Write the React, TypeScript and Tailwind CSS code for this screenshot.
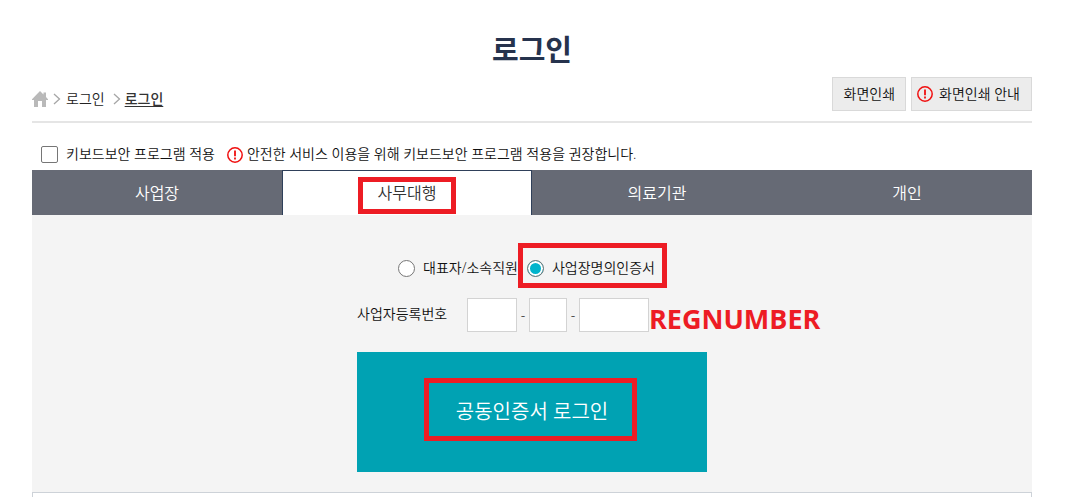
import { useState } from "react";

const tabs = ["사업장", "사무대행", "의료기관", "개인"];

function AlertIcon() {
  return (
    <svg viewBox="0 0 16 16" className="size-4 shrink-0" fill="none" aria-hidden="true">
      <circle cx="8" cy="8" r="7.2" stroke="#f01010" strokeWidth="1.5" />
      <path d="M8 3.5v5.8M8 10.6v2" stroke="#f01010" strokeWidth="1.8" />
    </svg>
  );
}

function HomeIcon() {
  return (
    <svg viewBox="0 0 16 16" className="size-4" fill="#b9b9b9" aria-hidden="true">
      <path d="M8 0 11.5 3.5V1.5H14V6L16 8.2V9H14V16H10V10H6V16H2V9H0V8.2Z" />
    </svg>
  );
}

function Chevron() {
  return (
    <svg viewBox="0 0 8 12" className="h-3 w-2" fill="none" aria-hidden="true">
      <path d="M1 1 6.5 6 1 11" stroke="#a6a6a6" strokeWidth="1.3" />
    </svg>
  );
}

const radioClass =
  "size-[17px] shrink-0 appearance-none rounded-full border border-[#767676] bg-white checked:bg-[#00b4cc] checked:shadow-[inset_0_0_0_2px_white]";
const numberClass = "h-[34px] border border-[#d3d3d3] bg-white px-2 text-sm outline-none";

export default function App() {
  const [active, setActive] = useState(1);
  const [cert, setCert] = useState("business");

  return (
    <main className="flex min-h-screen flex-col bg-white pr-[57px] pl-8 font-['Open_Sans','Noto_Sans_CJK_KR',sans-serif] text-sm leading-5 font-[350] text-[#111]">
      <h1 className="pt-[30px] text-center text-[29px] leading-10 font-bold text-[#26334d]">로그인</h1>

      <div className="mt-[7px] flex items-start justify-between border-b-2 border-[#e5e5e5] pb-[10px]">
        <nav aria-label="현재 위치" className="mt-3 flex items-center">
          <a href="#home" aria-label="홈">
            <HomeIcon />
          </a>
          <span className="mx-[5px]">
            <Chevron />
          </span>
          <a href="#login" className="text-[#222]">로그인</a>
          <span className="mr-1 ml-2">
            <Chevron />
          </span>
          <a href="#login" aria-current="page" className="font-medium text-[#333] underline underline-offset-2">
            로그인
          </a>
        </nav>
        <div className="flex gap-[5px]">
          <button type="button" className="h-[34px] border border-[#d9d9d9] bg-[#ececec] pr-[10px] pl-[11px]">
            화면인쇄
          </button>
          <button
            type="button"
            className="flex h-[34px] items-center gap-[6px] border border-[#d9d9d9] bg-[#ececec] pr-[11px] pl-[5px]"
          >
            <AlertIcon />
            화면인쇄 안내
          </button>
        </div>
      </div>

      <div className="flex h-[47px] items-center pt-4 pl-[9px]">
        <input
          id="keyboard-security"
          type="checkbox"
          className="size-[17px] appearance-none rounded-xs border border-[#767676] bg-white checked:bg-[#00b4cc]"
        />
        <label htmlFor="keyboard-security" className="ml-2 pb-[2px]">
          키보드보안 프로그램 적용
        </label>
        <p className="ml-3 flex items-center gap-1">
          <AlertIcon />
          <span className="pb-[2px]">안전한 서비스 이용을 위해 키보드보안 프로그램 적용을 권장합니다.</span>
        </p>
      </div>

      <div role="tablist" className="grid h-[45px] grid-cols-4 bg-[#666a75] text-base">
        {tabs.map((tab, i) => (
          <button
            key={tab}
            type="button"
            role="tab"
            aria-selected={active === i}
            onClick={() => setActive(i)}
            className={
              active === i
                ? "border-x border-t border-[#2f405a] bg-white text-[#333]"
                : "text-white"
            }
          >
            <span className="relative">
              {tab}
              {i === 1 && (
                <span className="pointer-events-none absolute -inset-x-5 -top-[5px] -bottom-[10px] border-5 border-[#ed1c24]" />
              )}
            </span>
          </button>
        ))}
      </div>

      <form className="bg-[#f4f4f4] pt-[43px] pb-5" onSubmit={(e) => e.preventDefault()}>
        <div className="mx-auto w-[350px]">
          <div className="flex h-5 items-center gap-[9px] pl-[41px] whitespace-nowrap">
            <label className="flex items-center gap-2">
              <input
                type="radio"
                name="cert"
                checked={cert === "owner"}
                onChange={() => setCert("owner")}
                className={radioClass}
              />
              대표자/소속직원
            </label>
            <label className="relative flex items-center gap-2">
              <input
                type="radio"
                name="cert"
                checked={cert === "business"}
                onChange={() => setCert("business")}
                className={radioClass}
              />
              사업장명의인증서
              <span className="pointer-events-none absolute -top-[15px] -right-3 -bottom-[10px] -left-[9px] border-5 border-[#ed1c24]" />
            </label>
          </div>

          <div className="mt-5 flex items-center">
            <label htmlFor="reg-1" className="w-[110px] pb-[2px]">
              사업자등록번호
            </label>
            <input id="reg-1" maxLength={3} className={`${numberClass} w-[50px]`} />
            <span className="w-3 text-center">-</span>
            <input aria-label="사업자등록번호 둘째 자리" maxLength={2} className={`${numberClass} w-[38px]`} />
            <span className="w-3 text-center">-</span>
            <div className="relative">
              <input aria-label="사업자등록번호 셋째 자리" maxLength={5} className={`${numberClass} block w-[70px]`} />
              <span className="absolute top-[3px] left-full font-['Open_Sans',sans-serif] text-[27px] leading-9 font-bold text-[#ed1c24]">
                REGNUMBER
              </span>
            </div>
          </div>

          <button type="submit" className="mt-5 h-[120px] w-full bg-[#00a2b3] text-xl text-white">
            <span className="relative">
              공동인증서 로그인
              <span className="pointer-events-none absolute -top-5 -right-[29px] -bottom-4 -left-8 border-5 border-[#ed1c24]" />
            </span>
          </button>
        </div>
      </form>

      <div className="flex-1 border border-b-0 border-[#cdd2d8] bg-white" />
    </main>
  );
}
